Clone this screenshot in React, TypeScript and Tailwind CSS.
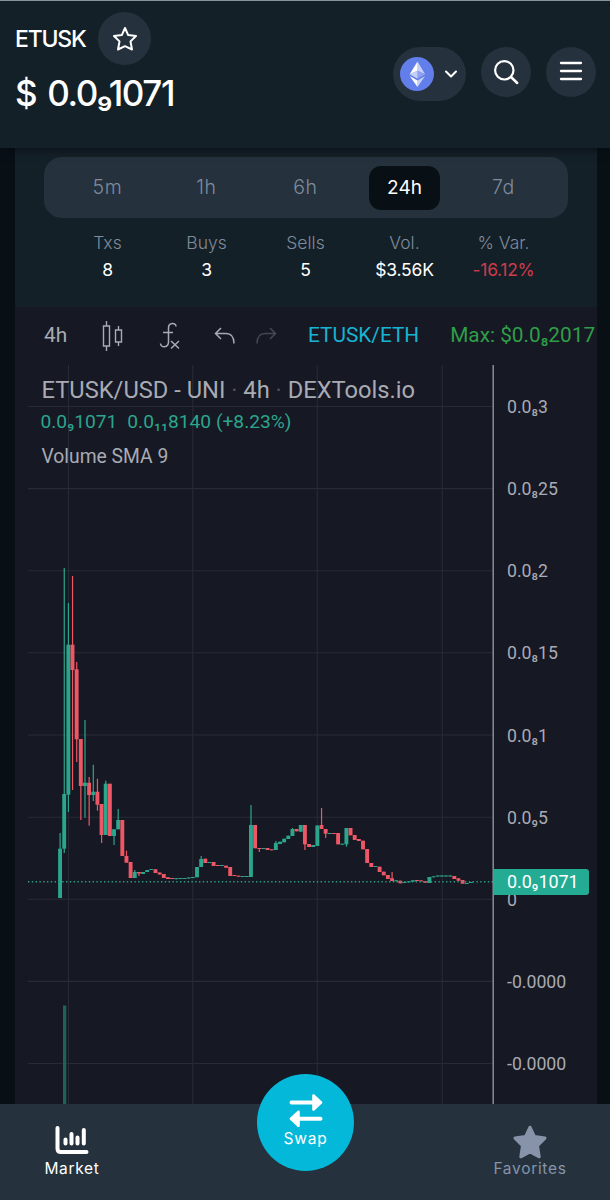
import { ChevronDown } from "lucide-react";

type Candle = [dir: "u" | "d", high: number, top: number, bottom: number, low: number];

// y positions of each candle, one every 4.15px starting at x = 60
const candles: Candle[] = [
  ["u", 833, 848.7, 898, 898], ["u", 568, 794, 848.7, 853], ["u", 603, 644.7, 794.7, 812],
  ["d", 576, 644.7, 670, 790], ["d", 662, 669.3, 739.3, 762], ["d", 739, 739, 786, 820],
  ["u", 720, 782.7, 786, 817.7], ["d", 777, 782.7, 795, 825.7], ["u", 764.7, 791.7, 795, 801],
  ["d", 778.7, 791.7, 804.7, 810.7], ["d", 804, 804, 835, 843], ["u", 780.7, 783.7, 835, 835],
  ["d", 783.7, 783.7, 836, 836], ["u", 829.3, 829.3, 836, 845], ["u", 809, 820, 829.3, 829.3],
  ["d", 820, 820, 856, 856], ["d", 850.7, 856, 862.7, 862.7], ["d", 862, 862, 878, 878],
  ["u", 870, 872, 878, 878], ["d", 872, 872, 873.5, 876], ["u", 872, 872, 874, 874],
  ["u", 870, 870, 872, 872], ["u", 869, 869, 870, 870], ["d", 869.3, 869.3, 873, 873],
  ["d", 872.5, 872.5, 874.5, 874.5], ["d", 874, 874, 878, 878], ["d", 877.3, 877.3, 879, 879],
  ["d", 878, 878, 879, 879], ["u", 878.2, 878.2, 879.2, 879.2], ["u", 878, 878, 879, 879],
  ["u", 878, 878, 879, 879], ["u", 877.5, 877.5, 878.5, 878.5], ["u", 877, 877, 878, 878],
  ["u", 867, 867, 877.3, 877.3], ["u", 856, 859, 867, 867], ["d", 858.7, 858.7, 863, 863],
  ["u", 862, 862, 863, 863], ["d", 862, 862, 866, 866], ["d", 865, 865, 866, 866],
  ["u", 865, 865, 866, 866], ["d", 865.7, 865.7, 867.7, 867.7], ["d", 867, 867, 876, 876],
  ["d", 875, 875, 876, 876], ["d", 875.7, 875.7, 876.7, 876.7], ["u", 876, 876, 877, 877],
  ["u", 876, 876, 877, 877], ["u", 805, 825, 877, 877], ["d", 825, 825, 848.3, 848.3],
  ["d", 848, 848, 849, 852], ["u", 848, 848, 849, 849], ["d", 848, 848, 850, 850],
  ["d", 849.3, 849.3, 850.3, 850.3], ["u", 841, 843, 850, 850], ["u", 841.7, 841.7, 844, 844],
  ["u", 838.7, 838.7, 842.3, 842.3], ["u", 835.7, 835.7, 839, 839], ["u", 828, 829, 836, 836],
  ["d", 829, 829, 831.3, 831.3], ["u", 825, 825, 831.7, 831.7], ["d", 825, 825, 844.3, 850],
  ["d", 844, 844, 847, 847], ["u", 845, 845, 847, 847], ["u", 825.5, 825.5, 846, 846],
  ["d", 808, 825, 829, 829], ["d", 829, 829, 833.7, 838], ["u", 833, 833, 834, 834],
  ["d", 833, 833, 834, 834], ["d", 833, 833, 844.3, 844.3], ["u", 843.7, 843.7, 844.7, 844.7],
  ["u", 828, 828, 844.3, 846.7], ["d", 828, 828, 835.3, 835.3], ["d", 835, 835, 840, 840],
  ["d", 839, 839, 841, 841], ["d", 840.7, 840.7, 849.3, 849.3], ["d", 849, 849, 863, 863],
  ["d", 863, 863, 867, 867], ["u", 866, 866, 867, 867], ["d", 866.7, 866.7, 872, 872],
  ["d", 871.7, 871.7, 875.3, 875.3], ["d", 875, 875, 879, 879], ["d", 872, 878.3, 881, 881],
  ["u", 880.3, 880.3, 881.3, 881.3], ["d", 880.7, 880.7, 883.3, 883.3], ["u", 882, 882, 883, 883],
  ["u", 881.3, 881.3, 882.3, 882.3], ["u", 880.3, 880.3, 881.7, 881.7], ["d", 880, 880, 881, 881],
  ["d", 880.4, 880.4, 881.4, 881.4], ["d", 881.3, 881.3, 882.7, 882.7], ["u", 877, 877, 883, 883],
  ["u", 876.3, 876.3, 877.3, 877.3], ["u", 875.5, 875.5, 876.5, 876.5], ["u", 875.5, 875.5, 876.5, 876.5],
  ["u", 875.5, 875.5, 876.5, 876.5], ["u", 875.5, 875.5, 876.5, 876.5], ["d", 876, 876, 879, 879],
  ["d", 878.3, 878.3, 880.7, 880.7], ["d", 880, 880, 883.7, 883.7], ["u", 883, 883, 884, 884],
  ["u", 882, 882, 883, 883],
];

const stats = [
  { range: "5m", label: "Txs", value: "8" },
  { range: "1h", label: "Buys", value: "3" },
  { range: "6h", label: "Sells", value: "5" },
  { range: "24h", label: "Vol.", value: "$3.56K", active: true },
  { range: "7d", label: "% Var.", value: "-16.12%", down: true },
];

const prices = ["0.0₈3", "0.0₈25", "0.0₈2", "0.0₈15", "0.0₈1", "0.0₉5", "0", "-0.0000", "-0.0000"];
const gridX = [68.5, 192.8, 317.3, 442.3];
const gridY = [406.5, 488.6, 570.7, 652.8, 735, 817.2, 899.3, 981.4, 1063.5];

function EthLogo() {
  return (
    <svg viewBox="0 0 34 34" className="size-[34px]">
      <circle cx="17" cy="17" r="17" fill="#627eea" />
      <path d="M17.5 4.5v9.2l7.6 3.5z" fill="#c5cff7" />
      <path d="M17.5 4.5 9.7 17.2l7.8-3.5z" fill="#fff" />
      <path d="M17.5 21.8v-8.1l7.6 3.5z" fill="#8fa2ef" />
      <path d="m9.7 17.2 7.8 4.6v-8.1z" fill="#c5cff7" />
      <path d="M17.5 30v-6.6l7.6-4.5z" fill="#c5cff7" />
      <path d="M17.5 30v-6.6l-7.8-4.5z" fill="#fff" />
    </svg>
  );
}

function Header() {
  return (
    <header className="relative flex h-[148px] justify-between border-t border-[#84959d] bg-[#142027] pl-[15px] pr-[14px] text-white shadow-[0_2px_8px_rgba(5,10,16,0.7)]">
      <div className="pt-[11px]">
        <div className="flex items-center gap-3">
          <h1 className="w-[71px] whitespace-nowrap text-[23px] font-medium leading-8 tracking-[-1.2px]">ETUSK</h1>
          <button className="flex size-[53px] items-center justify-center rounded-full bg-[#25313c]">
            <svg viewBox="0 0 26 26" className="size-[26px]" fill="none" stroke="currentColor" strokeWidth="2" strokeLinejoin="round">
              <path d="m13 2 3.2 7.1 7.8.9-5.5 5.4L20 23.500l-7-3.300-7 3.300 1.500-8.100L2 10l7.800-.9z" />
            </svg>
          </button>
        </div>
        <p className="mt-1 whitespace-nowrap text-[35px] font-medium leading-[48px] tracking-[-1.4px] [word-spacing:3px]">$ 0.0₉1071</p>
      </div>
      <div className="flex items-start gap-[15px] pt-[46px]">
        <button className="flex h-[54px] w-[73px] items-center justify-between rounded-full bg-[#25313c] pl-[7px] pr-[5px]">
          <EthLogo />
          <ChevronDown className="size-5" strokeWidth={2.5} />
        </button>
        <button className="flex size-[50px] items-center justify-center rounded-full bg-[#25313c]">
          <svg viewBox="0 0 26 26" className="size-[26px]" fill="none" stroke="currentColor" strokeWidth="2.2" strokeLinecap="round">
            <circle cx="11.3" cy="11.3" r="9.2" />
            <path d="m18 18 6.2 6" strokeWidth="2.5" />
          </svg>
        </button>
        <button className="flex size-[50px] items-center justify-center rounded-full bg-[#25313c]">
          <svg viewBox="0 0 24 20" className="mb-0.5 h-5 w-6" stroke="currentColor" strokeWidth="2.3" strokeLinecap="round">
            <path d="M2 2h20M2 10h20M2 18h20" />
          </svg>
        </button>
      </div>
    </header>
  );
}

function Stats() {
  return (
    <section className="h-[159px] bg-[#142027] px-[29px] pt-[9px]">
      <div className="grid h-[61px] grid-cols-5 items-center rounded-[18px] bg-[#25313c] pl-[14px] pr-[15px]">
        {stats.map((s) => (
          <div key={s.range} className="flex justify-center">
            <button
              className={
                s.active
                  ? "h-[44px] w-[71px] rounded-xl bg-[#081016] pt-0.5 text-[19px] text-white"
                  : "h-[44px] w-[71px] pt-px text-[19.5px] font-light tracking-[0.6px] text-[#7f8b9c]"
              }
            >
              {s.range}
            </button>
          </div>
        ))}
      </div>
      <div className="grid grid-cols-5 pl-[14px] pr-[15px] pt-[11px] text-center">
        {stats.map((s) => (
          <div key={s.label} className="whitespace-nowrap text-[17.5px] leading-[27px]">
            <div className="font-light text-[#7f8b9c]">{s.label}</div>
            <div className={s.down ? "tracking-[-0.3px] text-[#cf3a4c]" : "tracking-[-0.2px] text-white"}>{s.value}</div>
          </div>
        ))}
      </div>
    </section>
  );
}

function Toolbar() {
  return (
    <div className="flex h-[58px] items-center whitespace-nowrap pl-[29px] text-[20.8px] text-[#a9abb4]">
      <span className="w-[58px]">4h</span>
      <svg viewBox="0 0 22 30" className="h-[30px] w-[22px]" fill="none" stroke="currentColor" strokeWidth="1.4">
        <path d="M1.5 5h6v20h-6zM4.5 0v5M4.5 25v5M13.5 9h6v12h-6zM16.5 5v4M16.5 21v4" />
      </svg>
      <svg viewBox="0 0 22 28" className="ml-[35px] h-[28px] w-[22px]" fill="none" stroke="currentColor" strokeWidth="1.5">
        <path d="M17 4.5C17 .5 9.5.2 9.5 6v14c0 6-8 6-8 1.5M4 10.5h10M12 19l8 7.5M20 19l-8 7.5" />
      </svg>
      <svg viewBox="0 0 22 18" className="ml-[33px] h-[18px] w-[22px]" fill="none" stroke="currentColor" strokeWidth="1.5">
        <path d="M7 1 1.5 6.5 7 12M1.5 6.5H12c5 0 8 3.5 8 10" />
      </svg>
      <svg viewBox="0 0 22 18" className="ml-[19px] h-[18px] w-[22px] text-[#454852]" fill="none" stroke="currentColor" strokeWidth="1.5">
        <path d="m15 1 5.5 5.5L15 12M20.5 6.5H10c-5 0-8 3.5-8 10" />
      </svg>
      <span className="ml-[31px] text-[#17b4d4]">ETUSK/ETH</span>
      <span className="ml-[31px] text-[#2f9e48]">Max: $0.0₈2017</span>
    </div>
  );
}

function Plot() {
  return (
    <svg viewBox="28 365 466 739" className="ml-[13px] h-[739px] w-[466px] shrink-0">
      {gridX.map((x) => (
        <path key={x} d={`M${x} 365V1104`} stroke="#282a35" strokeWidth="1.1" />
      ))}
      {gridY.map((y) => (
        <path key={y} d={`M28 ${y}H493`} stroke="#282a35" strokeWidth="1.1" />
      ))}
      <rect x="63" y="1005.5" width="3.3" height="99" fill="#1f6258" />
      {candles.map(([dir, high, top, bottom, low], i) => {
        const x = 60 + i * 4.15;
        const color = dir === "u" ? "#2ca58d" : "#ee5765";
        return (
          <g key={i} fill={color}>
            <rect x={x - 0.5} y={high} width="1.2" height={low - high} />
            <rect x={x - 1.9} y={top} width="3.9" height={bottom - top} />
          </g>
        );
      })}
      <path d="M28 881.8H493" stroke="#2a9c88" strokeWidth="1.4" strokeDasharray="1.4 2.4" />
      <path d="M493.2 365V1104" stroke="#8b8d96" strokeWidth="1.5" />
    </svg>
  );
}

function Chart() {
  return (
    <section className="h-[797px] bg-[#161823] font-[Roboto,sans-serif]">
      <Toolbar />
      <div className="relative flex">
        <Plot />
        <div className="pt-[2px] text-[17.7px] leading-none text-[#a9abb4]">
          {prices.map((p, i) => (
            <div key={i} className="flex h-[82.1px] items-center whitespace-nowrap pl-[13px]">
              {p}
            </div>
          ))}
        </div>
        <div className="absolute left-[26.5px] top-[9px] whitespace-nowrap text-[#a9abb4]">
          <div className="text-[23.7px] leading-8">
            ETUSK/USD - UNI <span className="text-[#50535d]">·</span> 4h <span className="text-[#50535d]">·</span> DEXTools.io
          </div>
          <div className="-ml-px flex gap-[10px] text-[19.2px] leading-8 text-[#2ca58d]">
            <span>0.0₉1071</span>
            <span>0.0₁₁8140 (+8.23%)</span>
          </div>
          <div className="pt-px text-[19.3px] leading-9">Volume SMA 9</div>
        </div>
        <div className="absolute left-[479px] top-[504px] flex h-[26px] w-[95px] items-center rounded-r-[3px] bg-[#24ab94] pl-[13px] text-[17.9px] leading-none text-white">
          0.0₉1071
        </div>
      </div>
    </section>
  );
}

function BottomNav() {
  return (
    <nav className="relative flex h-24 justify-between bg-[#25323d] px-[44px] pt-[21px] text-[15.5px] text-white">
      <div className="flex w-[56px] flex-col items-center">
        <svg viewBox="0 0 34 30" className="h-[30px] w-[34px]" fill="none" stroke="currentColor" strokeWidth="4" strokeLinecap="round">
          <path d="M2.5 3v20.5q0 3.5 3.5 3.5h25.5M10.5 14.5v4M16.5 9v9.5M22.5 12.5v6M28.8 5v13.5" />
        </svg>
        <span className="mt-[3px] leading-[22px] tracking-[0.7px]">Market</span>
      </div>
      <div className="-mr-px flex w-[74px] flex-col items-center text-[#8793a9]">
        <svg viewBox="0 0 34 34" className="h-[34px] w-[34px]" fill="currentColor" stroke="currentColor" strokeWidth="3" strokeLinejoin="round">
          <path d="m17 2.2 4.5 9.4 10.5 1.5-7.5 7.5 1.7 11.2L17 27l-9.2 4.8 1.7-11.2L2 13.1l10.5-1.5z" />
        </svg>
        <span className="whitespace-nowrap leading-[20px] tracking-[0.7px]">Favorites</span>
      </div>
      <button className="absolute left-[257px] top-[-30px] flex size-[97px] flex-col items-center rounded-full bg-[#04b8da] pt-[20px]">
        <svg viewBox="0 0 34 33" className="h-[33px] w-[34px]" fill="none" stroke="currentColor" strokeWidth="4" strokeLinecap="round">
          <path d="M2.5 8.5H27M31.5 24.8H7" />
          <path d="m24.500 1.500 7.500 7-7.500 7zM9.500 17.800l-7.500 7 7.500 7z" fill="currentColor" strokeWidth="2.6" strokeLinejoin="round" />
        </svg>
        <span className="mt-px leading-[22px] tracking-[0.8px]">Swap</span>
      </button>
    </nav>
  );
}

export default function App() {
  return (
    <div className="h-[1200px] w-[610px] overflow-hidden bg-[#081016] font-[Inter,sans-serif]">
      <Header />
      <main className="ml-[15px] w-[582px]">
        <Stats />
        <Chart />
      </main>
      <BottomNav />
    </div>
  );
}
